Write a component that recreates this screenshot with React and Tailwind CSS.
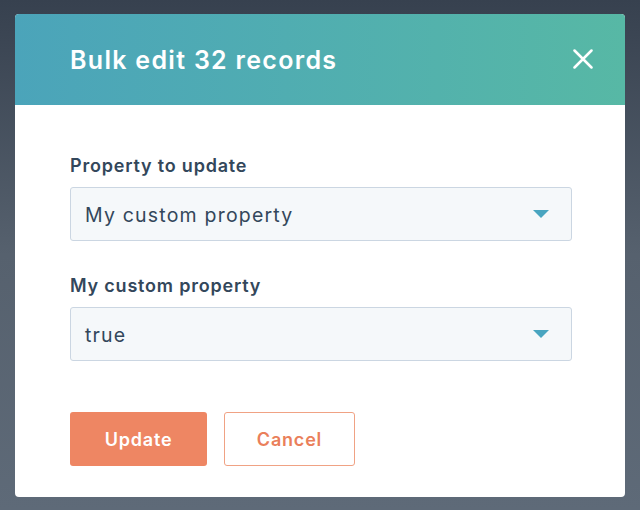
export default function App() {
	return (
		<div className="w-[640px] h-[510px] bg-gradient-to-b from-[#37414f] via-[#56616e] to-[#5e6a78] pt-[14px] px-[15px] font-['Inter',sans-serif]">
			<div className="w-[610px] h-[483px] bg-white rounded-[4px] overflow-hidden flex flex-col">
				<div className="h-[91px] shrink-0 bg-gradient-to-r from-[#4ba4ba] to-[#57b8a5] flex items-center justify-between pl-[55px] pr-[32px]">
					<div className="text-white text-[25px] font-semibold tracking-[1.3px] pt-[2px]">Bulk edit 32 records</div>
					<svg width="20" height="20" viewBox="0 0 20 20" className="mb-[2px]">
						<path d="M1.5 1.5 L18.5 18.5 M18.5 1.5 L1.5 18.5" stroke="white" strokeWidth="2.5" strokeLinecap="round" />
					</svg>
				</div>
				<div className="px-[55px] pt-[48px] text-[#33475b]">
					<div className="text-[18px] font-semibold leading-[24px] tracking-[0.8px] pt-[1px] -mb-[1px]">Property to update</div>
					<div className="mt-[10px] w-[502px] h-[54px] bg-[#f5f8fa] border border-[#cbd6e2] rounded-[3px] flex items-center justify-between pl-[14px] pr-[22px]">
						<span className="text-[19.5px] tracking-[1.2px] pt-[3px]">My custom property</span>
						<svg width="16" height="8" viewBox="0 0 16 8"><path d="M0 0 H16 L8 8 Z" fill="#49a5c0" /></svg>
					</div>
					<div className="mt-[32px] text-[18px] font-semibold leading-[24px] tracking-[0.8px] pt-[1px] -mb-[1px]">My custom property</div>
					<div className="mt-[10px] w-[502px] h-[54px] bg-[#f5f8fa] border border-[#cbd6e2] rounded-[3px] flex items-center justify-between pl-[14px] pr-[22px]">
						<span className="text-[19.5px] tracking-[1.2px] pt-[3px]">true</span>
						<svg width="16" height="8" viewBox="0 0 16 8"><path d="M0 0 H16 L8 8 Z" fill="#49a5c0" /></svg>
					</div>
					<div className="mt-[51px] flex gap-[17px]">
						<div className="w-[137px] h-[54px] bg-[#ee8663] rounded-[3px] flex items-center justify-center text-white text-[18px] font-semibold tracking-[0.8px]">Update</div>
						<div className="w-[131px] h-[54px] bg-white border border-[#f0a284] rounded-[3px] flex items-center justify-center text-[#ea7f5b] text-[18px] font-semibold tracking-[0.8px]">Cancel</div>
					</div>
				</div>
			</div>
		</div>
	)
}
